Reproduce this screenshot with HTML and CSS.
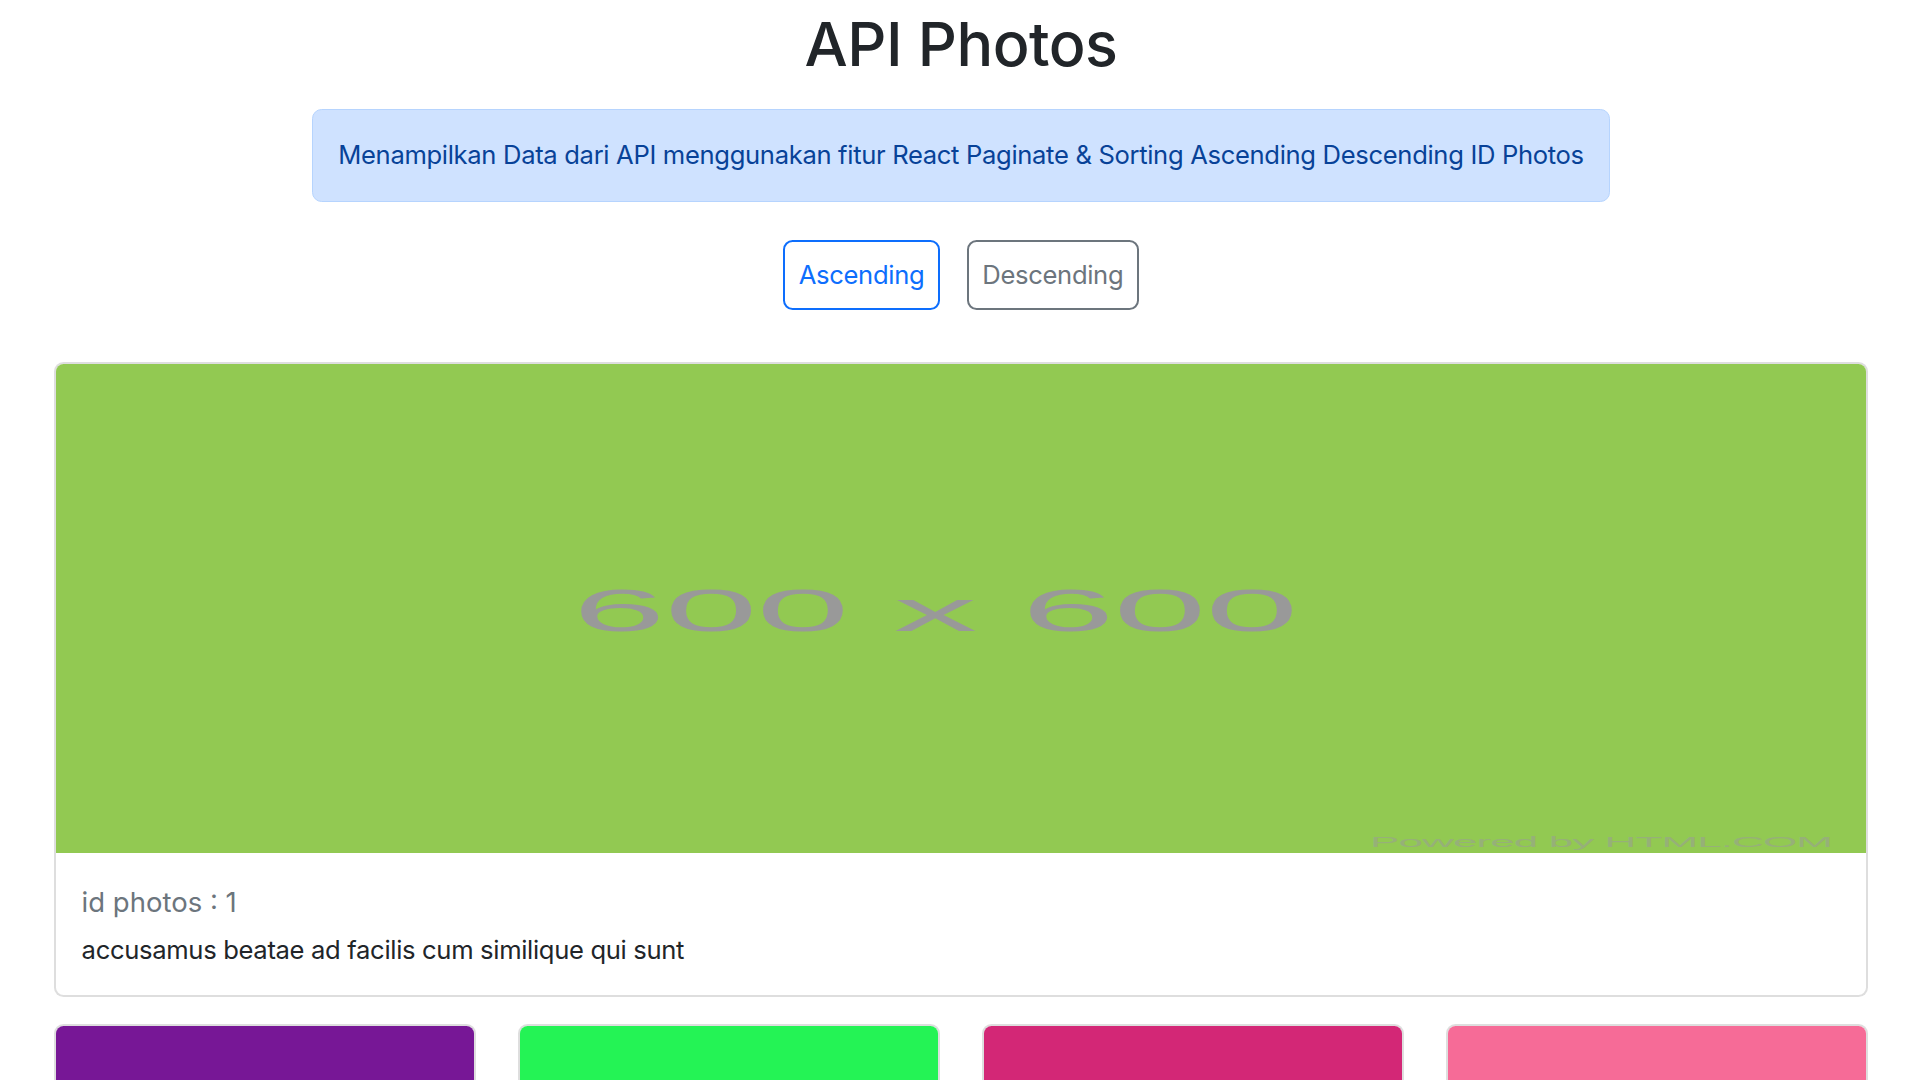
FILE: index.html
```html
<!DOCTYPE html>
<html lang="id">
<head>
<meta charset="utf-8">
<title>API Photos</title>
<link rel="stylesheet" href="styles.css">
</head>
<body>
<main class="page">
  <h1 class="title">API Photos</h1>
  <div class="alert-wrap">
    <div class="alert">Menampilkan Data dari API menggunakan fitur React Paginate &amp; Sorting Ascending Descending ID Photos</div>
  </div>
  <div class="sort">
    <button class="btn btn-primary-outline">Ascending</button>
    <button class="btn btn-secondary-outline">Descending</button>
  </div>

  <section class="card card-main">
    <svg class="card-img card-img-main" viewBox="0 0 1814 489" preserveAspectRatio="none" xmlns="http://www.w3.org/2000/svg">
      <rect width="1814" height="489" fill="#92c952"/>
      <text x="518" y="267" font-family="Liberation Sans, Arial, sans-serif" font-size="60" fill="#999999" textLength="726" lengthAdjust="spacingAndGlyphs">600 x 600</text>
      <text x="1317" y="483" font-family="Liberation Sans, Arial, sans-serif" font-size="15" fill="#9a9a9a" fill-opacity="0.55" textLength="463" lengthAdjust="spacingAndGlyphs">Powered by HTML.COM</text>
    </svg>
    <div class="card-body">
      <p class="card-subtitle">id photos : 1</p>
      <p class="card-text">accusamus beatae ad facilis cum similique qui sunt</p>
    </div>
  </section>

  <div class="grid">
    <section class="card">
      <div class="card-img card-img-small swatch-1"></div>
    </section>
    <section class="card">
      <div class="card-img card-img-small swatch-2"></div>
    </section>
    <section class="card">
      <div class="card-img card-img-small swatch-3"></div>
    </section>
    <section class="card">
      <div class="card-img card-img-small swatch-4"></div>
    </section>
  </div>
</main>
</body>
</html>
```

FILE: styles.css
```css
html {
  font-size: 25.6px;
}

body {
  margin: 0;
  background: #ffffff;
  color: #212529;
  font-family: Inter, "Noto Sans", "Liberation Sans", sans-serif;
  font-size: 25.6px;
  line-height: 1.5;
  letter-spacing: -0.33px;
}

.page {
  padding: 8px 52px 40px 54px;
}

.title {
  margin: 0;
  font-size: 61px;
  font-weight: 500;
  line-height: 1.2;
  text-align: center;
  color: #212529;
  letter-spacing: -0.5px;
}

.alert-wrap {
  display: flex;
  justify-content: center;
  margin-top: 27.5px;
}

.alert {
  padding: 26.6px 25.6px;
  border: 1.6px solid #b6d4fe;
  border-radius: 9.6px;
  background: #cfe2ff;
  color: #084298;
}

.sort {
  display: flex;
  justify-content: center;
  gap: 27px;
  margin-top: 37.5px;
}

.btn {
  font-family: inherit;
  font-size: 25.6px;
  letter-spacing: -0.33px;
  line-height: 38.4px;
  padding: 13.8px 13.5px;
  border: 2px solid;
  border-radius: 9.6px;
  background: #ffffff;
  cursor: pointer;
}

.btn-primary-outline {
  color: #0d6efd;
  border-color: #0d6efd;
}

.btn-secondary-outline {
  color: #6c757d;
  border-color: #6c757d;
}

.card {
  display: flex;
  flex-direction: column;
  border: 2px solid rgba(0, 0, 0, 0.13);
  border-radius: 9.6px;
  overflow: hidden;
  background: #ffffff;
}

.card-main {
  margin-top: 52px;
}

.card-img {
  display: block;
  width: 100%;
}

.card-img-main {
  height: 489px;
}

.card-img-small {
  height: 420px;
}

.swatch-1 { background: #771796; }
.swatch-2 { background: #24f355; }
.swatch-3 { background: #d32776; }
.swatch-4 { background: #f66b97; }

.card-body {
  padding: 30.6px 25.6px 25.6px;
}

.card-subtitle {
  margin: 0 0 9px;
  color: #6c757d;
  font-size: 27.5px;
  letter-spacing: 0;
  line-height: 1.4;
}

.card-text {
  margin: 0;
  font-size: 25.6px;
  line-height: 1.5;
}

.grid {
  display: grid;
  grid-template-columns: repeat(4, 1fr);
  gap: 42px;
  margin-top: 27px;
}
```
